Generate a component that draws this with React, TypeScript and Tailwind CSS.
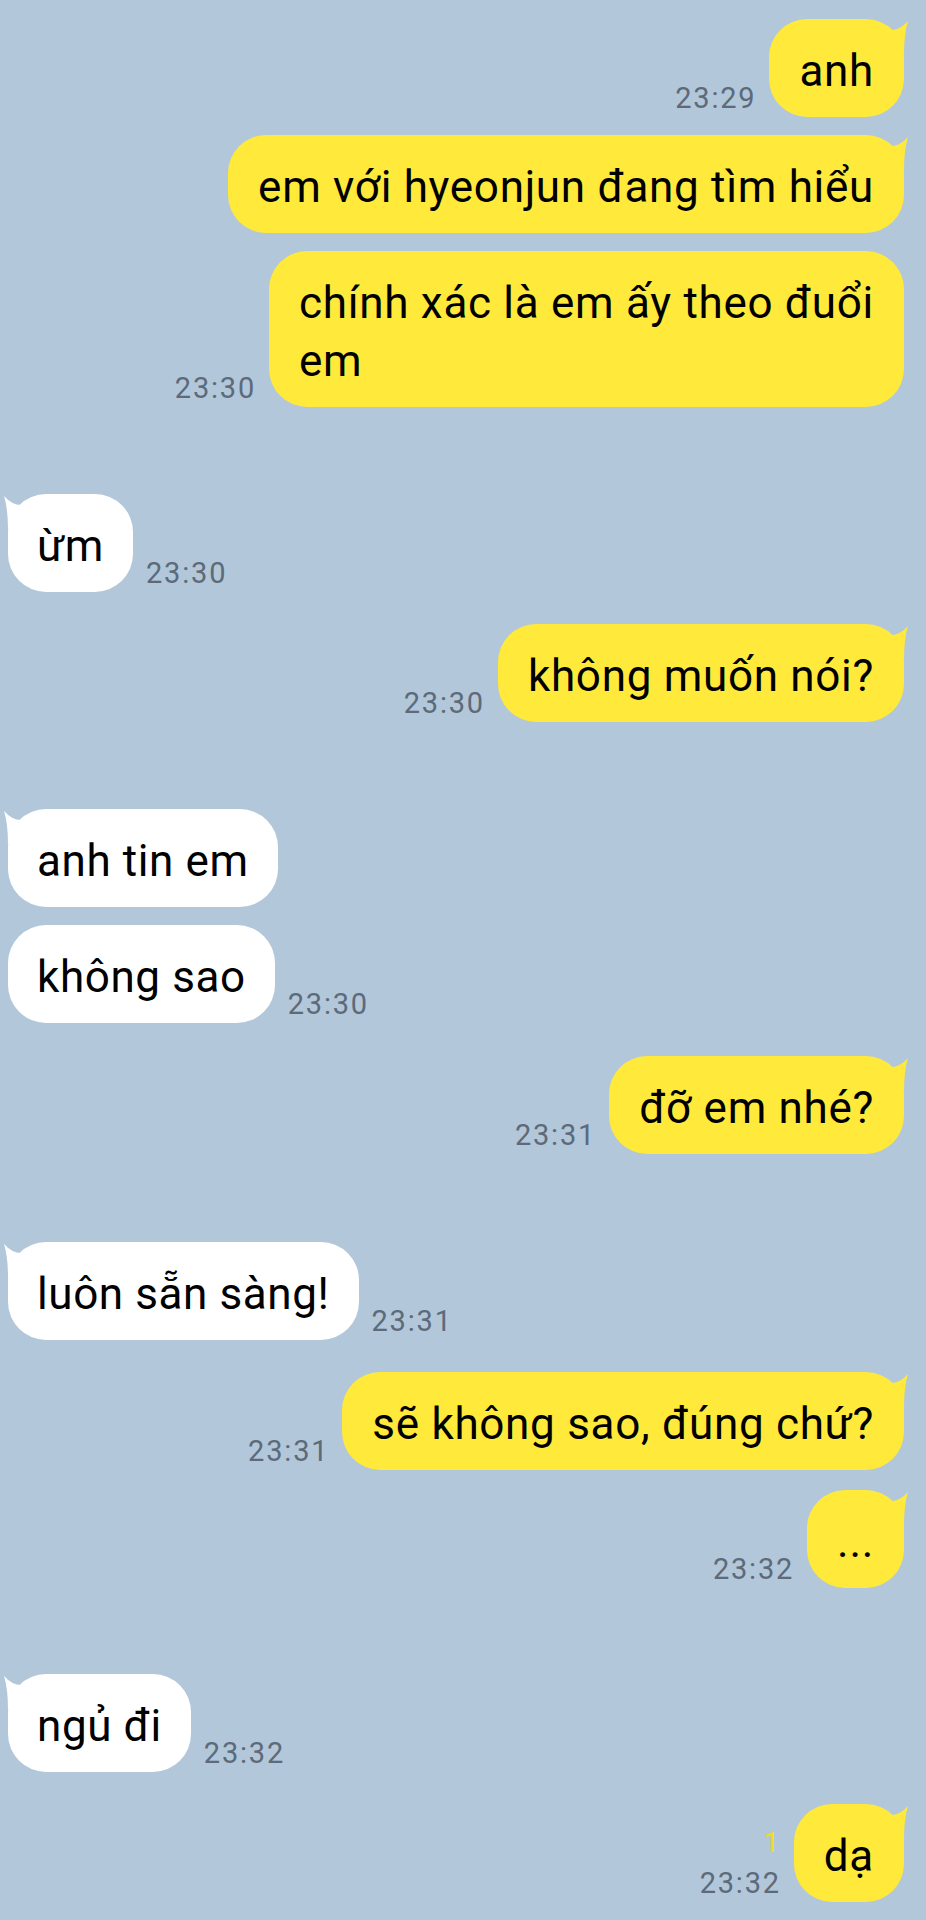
import React from "react";

function Tail({ side, color }: { side: "left" | "right"; color: string }) {
  return (
    <svg
      width="22"
      height="36"
      viewBox="0 0 22 36"
      className={
        side === "right"
          ? "absolute top-0 right-[-6px]"
          : "absolute top-0 left-[-6px] -scale-x-100"
      }
    >
      <path d="M3 11 Q12 11 20 2 Q16 15 16 35 L3 35 Z" fill={color} />
    </svg>
  );
}

function Time({ time, read }: { time: string; read?: boolean }) {
  return (
    <div className="flex flex-col items-end mb-[5px] shrink-0">
      {read && (
        <span className="text-[27px] leading-[26px] text-[#f0da2a] mb-[13px] mr-[2px]">1</span>
      )}
      <span className="text-[29px] leading-[28px] tracking-[1.8px] text-[#5d6a79]">{time}</span>
    </div>
  );
}

function Me({
  children,
  time,
  tail,
  read,
  mt,
}: {
  children: React.ReactNode;
  time?: string;
  tail?: boolean;
  read?: boolean;
  mt: string;
}) {
  return (
    <div className={`flex justify-end items-end gap-[13px] pr-[22px] ${mt}`}>
      {time && <Time time={time} read={read} />}
      <div className="relative bg-[#ffe93b] rounded-[38px] px-[30px] pt-[23px] pb-[17px] text-[44px] leading-[58px] tracking-[0.7px] text-black">
        {tail && <Tail side="right" color="#ffe93b" />}
        <span className="relative">{children}</span>
      </div>
    </div>
  );
}

function Other({
  children,
  time,
  tail,
  mt,
}: {
  children: React.ReactNode;
  time?: string;
  tail?: boolean;
  mt: string;
}) {
  return (
    <div className={`flex justify-start items-end gap-[13px] pl-[8px] ${mt}`}>
      <div className="relative bg-white rounded-[38px] px-[29px] pt-[23px] pb-[17px] text-[44px] leading-[58px] tracking-[0.6px] text-black">
        {tail && <Tail side="left" color="#ffffff" />}
        <span className="relative">{children}</span>
      </div>
      {time && <Time time={time} />}
    </div>
  );
}

export default function App() {
  return (
    <div className="w-[926px] h-[1920px] overflow-hidden bg-[#b2c7da] pt-[19px] font-[Roboto,'Noto_Sans',sans-serif]">
      <Me mt="mt-0" time="23:29" tail>
        anh
      </Me>
      <Me mt="mt-[18px]" tail>
        em với hyeonjun đang tìm hiểu
      </Me>
      <Me mt="mt-[18px]" time="23:30">
        chính xác là em ấy theo đuổi
        <br />
        em
      </Me>
      <Other mt="mt-[87px]" time="23:30" tail>
        ừm
      </Other>
      <Me mt="mt-[32px]" time="23:30" tail>
        không muốn nói?
      </Me>
      <Other mt="mt-[87px]" tail>
        anh tin em
      </Other>
      <Other mt="mt-[18px]" time="23:30">
        không sao
      </Other>
      <Me mt="mt-[33px]" time="23:31" tail>
        đỡ em nhé?
      </Me>
      <Other mt="mt-[88px]" time="23:31" tail>
        luôn sẵn sàng!
      </Other>
      <Me mt="mt-[32px]" time="23:31" tail>
        sẽ không sao, đúng chứ?
      </Me>
      <Me mt="mt-[20px]" time="23:32" tail>
        ...
      </Me>
      <Other mt="mt-[86px]" time="23:32" tail>
        ngủ đi
      </Other>
      <Me mt="mt-[32px]" time="23:32" tail read>
        dạ
      </Me>
    </div>
  );
}
